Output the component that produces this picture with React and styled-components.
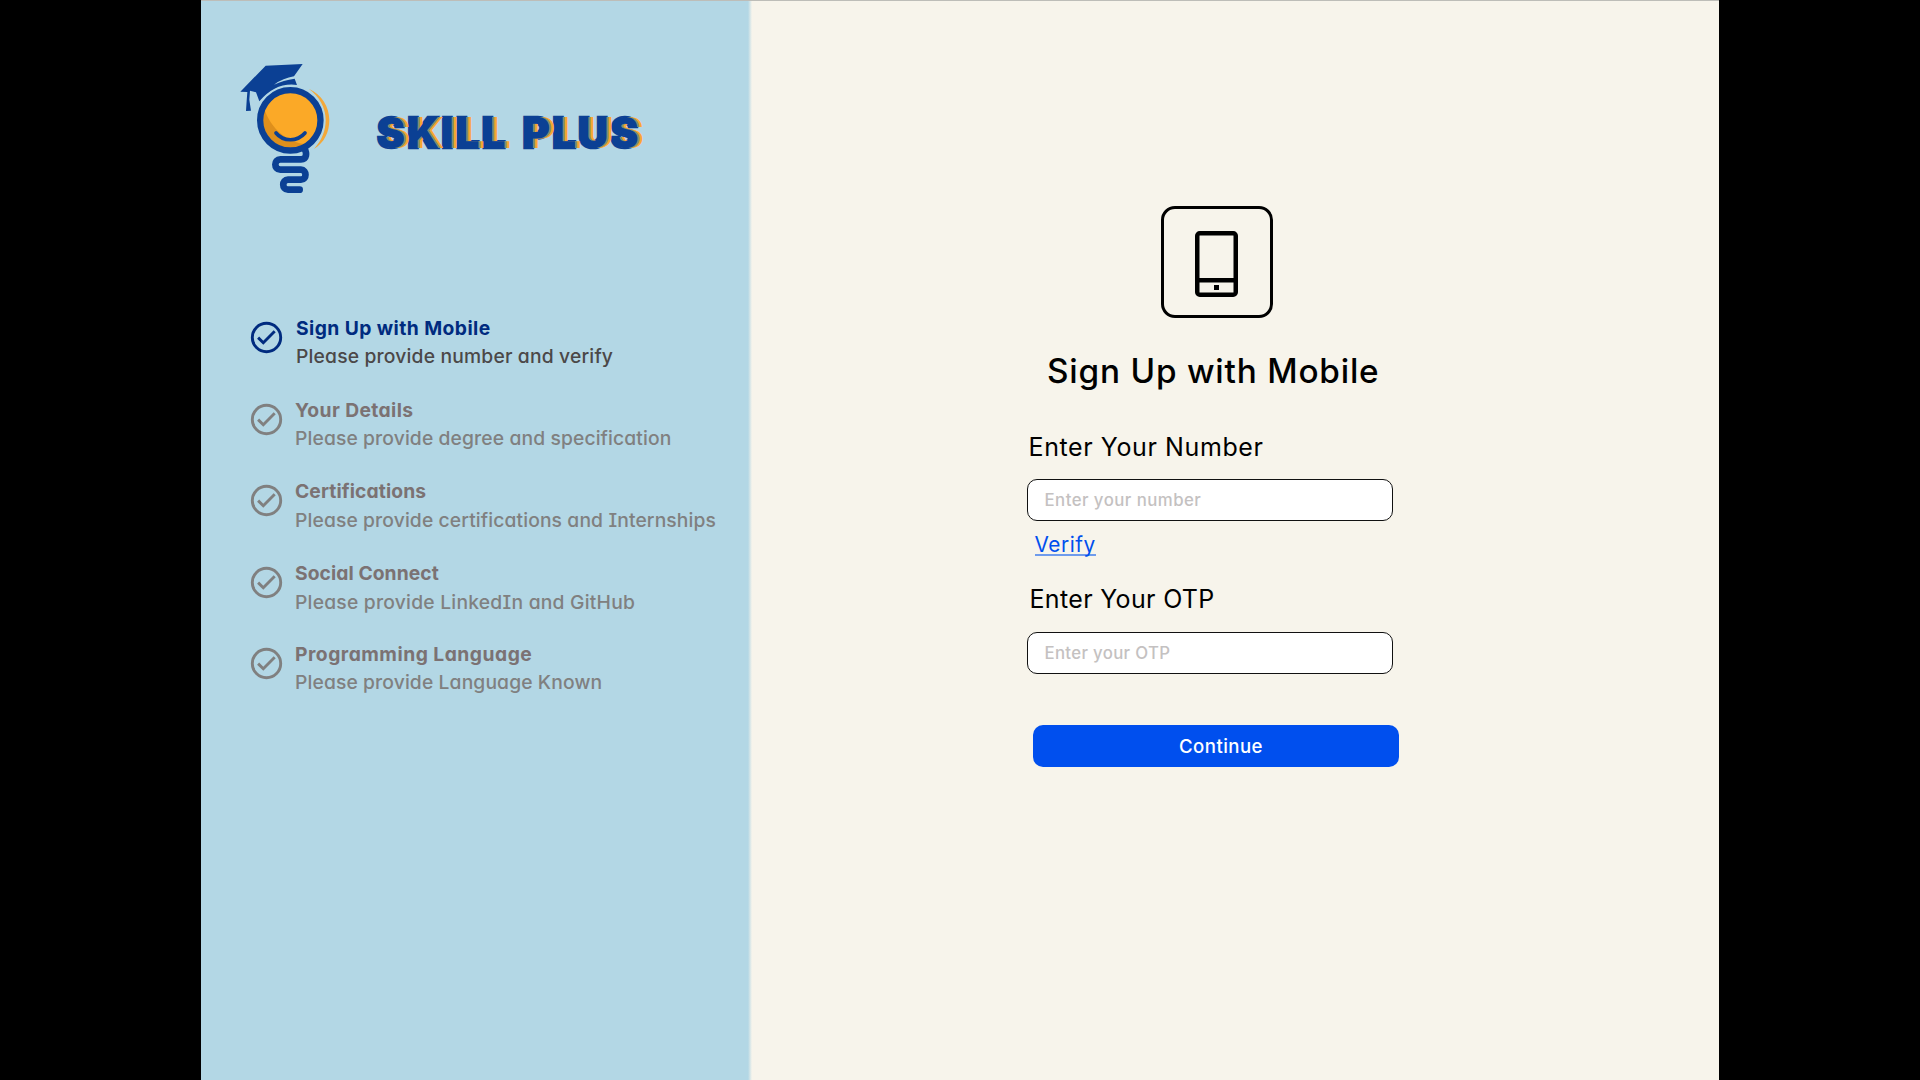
import React from "react";
import styled, { createGlobalStyle } from "styled-components";

const GlobalStyle = createGlobalStyle`
  * { box-sizing: border-box; }
  html, body { margin: 0; background: #000; }
  body {
    font-family: Inter, "Liberation Sans", sans-serif;
    font-feature-settings: "cv11" 1, "cv08" 1;
    overflow: hidden;
  }
`;

const Screen = styled.div`
  display: flex;
  width: 1518px;
  height: 1080px;
  margin-left: 201px;
  border-top: 1px solid #bdbdb8;
  background: #f7f4eb;
`;

const Sidebar = styled.aside`
  width: 551px;
  height: 100%;
  background: linear-gradient(to right, #b3d7e5 547px, #f7f4eb 551px);
`;

const Brand = styled.header`
  display: flex;
  align-items: flex-start;
  height: 312.6px;
  padding: 49px 0 0 29px;
`;

const BrandName = styled.div`
  display: flex;
  gap: 15px;
  margin: 58px 0 0 37px;
`;

const BrandWord = styled.span`
  font-size: 42px;
  line-height: 50px;
  font-weight: 900;
  font-feature-settings: "cv08" 0;
  letter-spacing: ${(p) => p.$tracking}px;
  color: #0b4094;
  -webkit-text-stroke: 2.5px #0b4094;
  paint-order: stroke fill;
  text-shadow: 2px 0 0 #7f8a86, 5px 0 0 #f5a733;
  white-space: nowrap;
`;

const Step = styled.div`
  display: flex;
  align-items: flex-start;
  height: ${(p) => p.$height}px;
  padding-left: 49px;
  color: ${(p) => (p.$active ? "#002b7f" : "#808080")};
`;

const StepIcon = styled.svg`
  flex: none;
  width: 33px;
  height: 33px;
  margin-top: 7.4px;
`;

const StepText = styled.div`
  display: flex;
  flex-direction: column;
  margin-left: ${(p) => (p.$active ? 13 : 12)}px;
`;

const StepTitle = styled.span`
  font-size: 19.3px;
  line-height: 28.5px;
  font-weight: 700;
  letter-spacing: ${(p) => p.$tracking}px;
  color: ${(p) => (p.$active ? "#002b7f" : "#7b7273")};
  white-space: nowrap;
`;

const StepNote = styled.span`
  font-size: 19.3px;
  line-height: 28.5px;
  font-weight: 460;
  letter-spacing: ${(p) => p.$tracking}px;
  color: ${(p) => (p.$active ? "#4b4848" : "#808080")};
  white-space: nowrap;
`;

const Main = styled.main`
  display: flex;
  flex-direction: column;
  align-items: flex-start;
  padding: 205px 0 0 275px;
`;

const PhoneBox = styled.div`
  display: flex;
  justify-content: center;
  align-items: center;
  width: 112px;
  height: 112px;
  margin-left: 134px;
  padding: 4px 1px 0 0;
  border: 3px solid #000;
  border-radius: 14px;
`;

const Title = styled.h1`
  margin: 33px 0 0 20px;
  font-size: 33.3px;
  line-height: 40px;
  font-weight: 500;
  letter-spacing: ${(p) => p.$tracking}px;
  white-space: nowrap;
`;

const Label = styled.label`
  margin: ${(p) => p.$top}px 0 0 ${(p) => p.$left}px;
  font-size: 25px;
  line-height: 32px;
  font-weight: 400;
  letter-spacing: ${(p) => p.$tracking}px;
  white-space: nowrap;
`;

const Field = styled.div`
  display: flex;
  align-items: center;
  width: 366px;
  height: 42px;
  margin-top: ${(p) => p.$top}px;
  padding: 0 0 1px 16.5px;
  border: 1px solid #111;
  border-radius: 10px;
  background: #fff;
  font-size: 16.8px;
  font-weight: 500;
  letter-spacing: ${(p) => p.$tracking}px;
  color: #c4c1c1;
`;

const Verify = styled.a`
  height: 25px;
  margin: 10px 0 0 7.5px;
  border-bottom: 2px solid #6f9bec;
  font-size: 20.8px;
  line-height: 28px;
  letter-spacing: ${(p) => p.$tracking}px;
  color: #004fee;
`;

const Button = styled.button`
  width: 366px;
  height: 42px;
  margin: 51px 0 0 6px;
  padding: 0 0 0 10px;
  border: 0;
  border-radius: 10px;
  background: #004fee;
  font: inherit;
  font-size: 18.6px;
  font-weight: 500;
  letter-spacing: ${(p) => p.$tracking}px;
  color: #fff;
`;

const steps = [
  { title: "Sign Up with Mobile", note: "Please provide number and verify", height: 82.2, titleTracking: 0.42, noteTracking: 0.17, active: true },
  { title: "Your Details", note: "Please provide degree and specification", height: 81.3, titleTracking: 0.38, noteTracking: 0.11 },
  { title: "Certifications", note: "Please provide certifications and Internships", height: 82, titleTracking: 0.1, noteTracking: 0.11 },
  { title: "Social Connect", note: "Please provide LinkedIn and GitHub", height: 80.5, titleTracking: 0.06, noteTracking: 0.22 },
  { title: "Programming Language", note: "Please provide Language Known", height: 80, titleTracking: 0.48, noteTracking: 0.11 },
];

function Logo() {
  return (
    <svg width="110" height="150" viewBox="0 0 330 450">
      <path d="M236 116 C276 134 298 170 298 210 C298 248 282 278 252 297 C276 270 287 242 287 210 C287 172 268 140 236 116Z" fill="#f3a83a" />
      <path d="M107 47 L218 42 L192 79 Q160 84 132 104 Q160 90 194 86 L201 105 Q138 96 88 154 L78 127 L60 122 L58 149 L63 182 L48 183 L50 152 L52 126 L31 125 Z" fill="#0b4094" />
      <circle cx="181" cy="211" r="102" fill="none" stroke="#b3d7e5" strokeWidth="5" />
      <circle cx="181" cy="211" r="90" fill="#fba927" />
      <path d="M104 180 C124 236 168 274 222 282 C180 304 130 290 108 248 C98 226 98 200 104 180Z" fill="#de8f1c" />
      <circle cx="181" cy="211" r="90.5" fill="none" stroke="#0b4094" strokeWidth="19" />
      <path d="M138 249 C160 276 202 276 225 249" fill="none" stroke="#0b4094" strokeWidth="11" strokeLinecap="round" />
      <path d="M223 294 C231 310 231 328 213 328 H151 C131 328 131 359 151 359 H213 C231 359 231 389 213 389 H174 C155 389 155 419 174 419 H209" fill="none" stroke="#0b4094" strokeWidth="20" strokeLinecap="round" strokeLinejoin="round" />
    </svg>
  );
}

function CheckIcon() {
  return (
    <StepIcon viewBox="-16.5 -16.5 33 33" fill="none" stroke="currentColor">
      <circle r="14.2" strokeWidth="2.9" />
      <path d="M-8.4 0.1 L-3.2 5.2 L8.2 -6.2" strokeWidth="2.9" />
    </StepIcon>
  );
}

function PhoneIcon() {
  return (
    <svg width="43" height="66" viewBox="0 0 43 66">
      <rect x="2.25" y="2.25" width="38.5" height="61.5" rx="2.5" fill="none" stroke="#000" strokeWidth="4.5" />
      <path d="M3 49.2 H40" stroke="#000" strokeWidth="4.5" />
      <rect x="19" y="54" width="5" height="5" />
    </svg>
  );
}

export default function App() {
  return (
    <>
      <GlobalStyle />
      <Screen>
        <Sidebar>
          <Brand>
            <Logo />
            <BrandName>
              <BrandWord $tracking={2.2}>SKILL</BrandWord>
              <BrandWord $tracking={2.1}>PLUS</BrandWord>
            </BrandName>
          </Brand>
          {steps.map((s) => (
            <Step key={s.title} $height={s.height} $active={s.active}>
              <CheckIcon />
              <StepText $active={s.active}>
                <StepTitle $active={s.active} $tracking={s.titleTracking}>{s.title}</StepTitle>
                <StepNote $active={s.active} $tracking={s.noteTracking}>{s.note}</StepNote>
              </StepText>
            </Step>
          ))}
        </Sidebar>
        <Main>
          <PhoneBox>
            <PhoneIcon />
          </PhoneBox>
          <Title $tracking={0.8}>Sign Up with Mobile</Title>
          <Label $top={40} $left={1.5} $tracking={0.6}>Enter Your Number</Label>
          <Field $top={16} $tracking={0.46}>Enter your number</Field>
          <Verify $tracking={0.55}>Verify</Verify>
          <Label $top={27} $left={2.5} $tracking={0.33}>Enter Your OTP</Label>
          <Field $top={17} $tracking={0.33}>Enter your OTP</Field>
          <Button $tracking={0.45}>Continue</Button>
        </Main>
      </Screen>
    </>
  );
}
